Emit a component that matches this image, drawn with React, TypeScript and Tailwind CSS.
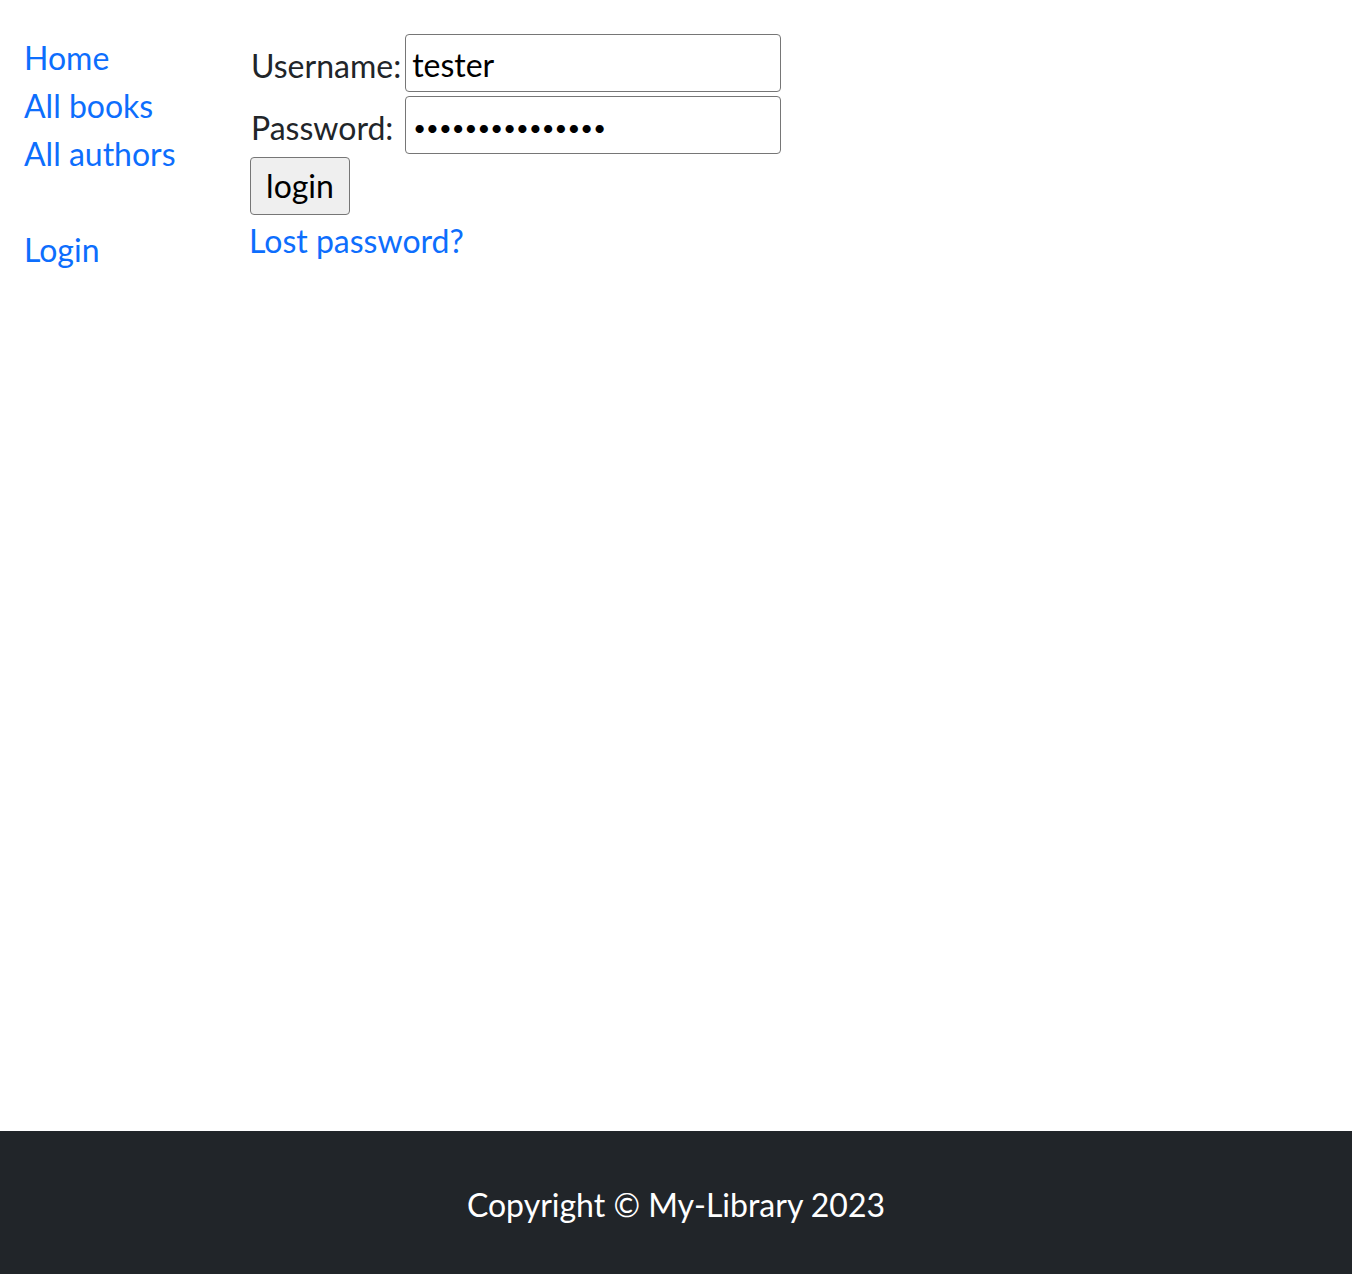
const font = { fontFamily: '"Segoe UI", Lato, "Noto Sans", sans-serif' };

const navLinks = ["Home", "All books", "All authors"];

export default function App() {
  return (
    <div
      className="min-h-screen flex flex-col bg-white text-[32px] leading-[48px] text-[#212529]"
      style={font}
    >
      <main className="flex-1 flex px-[24px] pt-[34px]">
        <div className="w-[201px] shrink-0">
          <ul>
            {navLinks.map((l) => (
              <li key={l}>
                <a href="#" className="text-[#0d6efd]">
                  {l}
                </a>
              </li>
            ))}
            <li className="mt-[48px]">
              <a href="#" className="text-[#0d6efd]">
                Login
              </a>
            </li>
          </ul>
        </div>
        <div className="pl-[24px]">
          <form>
            <div className="grid grid-cols-[auto_auto] gap-x-[4px] gap-y-[4px] w-max">
              <label className="pl-[2px] flex items-center pt-[6px]">Username:</label>
              <input
                type="text"
                defaultValue="tester"
                className="h-[58px] w-[376px] border border-[#767676] rounded-[4px] px-[6px] pt-[3px] text-black"
                style={font}
              />
              <label className="pl-[2px] flex items-center pt-[6px]">Password:</label>
              <input
                type="password"
                defaultValue="xxxxxxxxxxxxxxx"
                className="h-[58px] w-[376px] border border-[#767676] rounded-[4px] px-[7px] pt-[4px] text-[22px] tracking-[0.1px] text-black"
                style={font}
              />
            </div>
            <button
              type="button"
              className="mt-[3px] ml-[1px] h-[58px] w-[100px] bg-[#efefef] border border-[#767676] rounded-[4px] text-black leading-none"
              style={font}
            >
              login
            </button>
          </form>
          <p className="mt-[2px]">
            <a href="#" className="text-[#0d6efd]">
              Lost password?
            </a>
          </p>
        </div>
      </main>
      <footer className="bg-[#212529] text-white text-center pt-[50px] pb-[45px]">
        Copyright © My-Library 2023
      </footer>
    </div>
  );
}
